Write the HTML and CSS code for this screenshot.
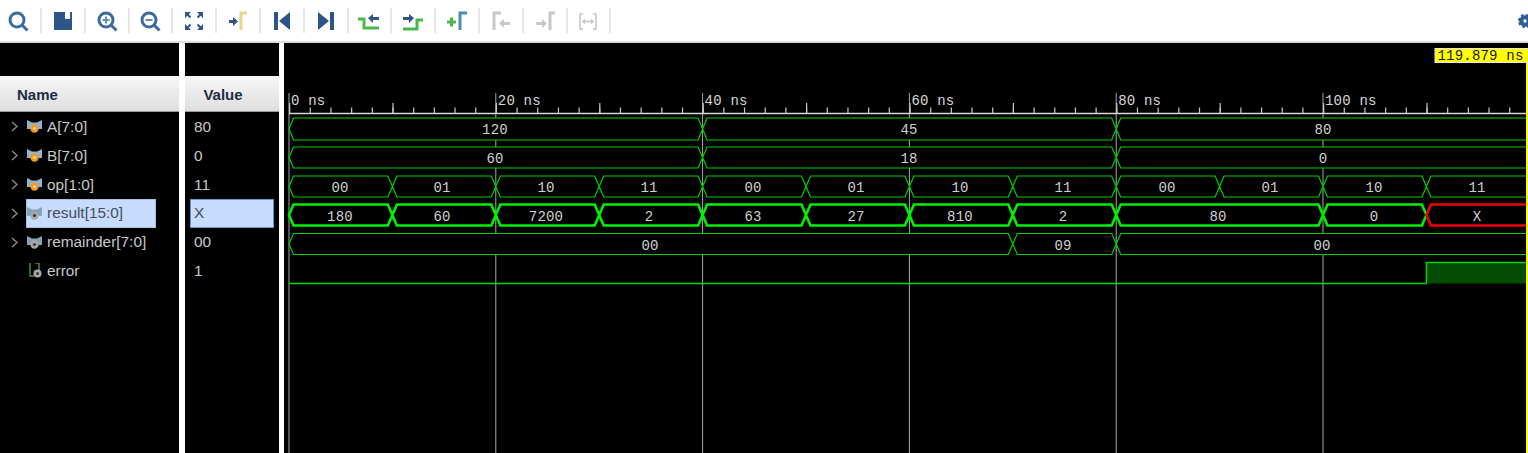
FILE: index.html
```html
<!DOCTYPE html>
<html lang="en">

<head>
  <meta charset="UTF-8">
  <title>Untitled - Wave</title>
  <link rel="stylesheet" href="styles.css">
</head>

<body>
  <div class="toolbar">
    <span class="tool tool-first">
      <svg class="ico" viewBox="0 0 24 24"><circle cx="11" cy="11" r="7" class="st-search"/><path d="M16 16l5.500 5.500" class="st-search"/></svg>
    </span>
    <span class="tool">
      <svg class="ico" viewBox="0 0 24 24"><path d="M3 3H21V21H3Z" class="fl-navy"/><path d="M14 3h5v7h-5z" class="fl-white"/></svg>
    </span>
    <span class="tool">
      <svg class="ico" viewBox="0 0 24 24"><circle cx="11" cy="11" r="7" class="st-search"/><path d="M16 16l5.500 5.500" class="st-search"/><path d="M7.500 11h7M11 7.500v7" class="st-thin"/></svg>
    </span>
    <span class="tool">
      <svg class="ico" viewBox="0 0 24 24"><circle cx="11" cy="11" r="7" class="st-search"/><path d="M16 16l5.500 5.500" class="st-search"/><path d="M7.500 11h7" class="st-thin"/></svg>
    </span>
    <span class="tool">
      <svg class="ico" viewBox="0 0 24 24"><path d="M4 4l4.500 4.500M20 4l-4.500 4.500M4 20l4.500-4.500M20 20l-4.500-4.500" class="st-fit"/><path d="M3 3h6L3 9zM21 3h-6l6 6zM3 21h6l-6-6zM21 21h-6l6-6z" class="fl-navy"/></svg>
    </span>
    <span class="tool">
      <svg class="ico" viewBox="0 0 24 24"><path d="M3 11h4V8l5 4.500-5 4.500v-3H3z" class="fl-navy"/><path d="M15 21V4h6" class="st-yellow"/></svg>
    </span>
    <span class="tool">
      <svg class="ico" viewBox="0 0 24 24"><path d="M4 3h4v18H4zM20 3v18L9 12z" class="fl-navy"/></svg>
    </span>
    <span class="tool">
      <svg class="ico" viewBox="0 0 24 24"><path d="M20 3h-4v18h4zM4 3v18l11-9z" class="fl-navy"/></svg>
    </span>
    <span class="tool">
      <svg class="ico" viewBox="0 0 24 24"><path d="M1 10h6v9h15" class="st-green"/><path d="M11 9l5-4v3h6v3h-6v3z" class="fl-navy"/></svg>
    </span>
    <span class="tool">
      <svg class="ico" viewBox="0 0 24 24"><path d="M2 20h14v-9h6" class="st-green"/><path d="M13 9L8 5v3H2v3h6v3z" class="fl-navy"/></svg>
    </span>
    <span class="tool">
      <svg class="ico" viewBox="0 0 24 24"><path d="M2 13h9M6.500 8.500v9" class="st-green"/><path d="M15 21V4h7" class="st-blue"/></svg>
    </span>
    <span class="tool">
      <svg class="ico" viewBox="0 0 24 24"><path d="M5 21V4h7" class="st-gray"/><path d="M10 14l5-4v3h6v3h-6v3z" class="fl-gray"/></svg>
    </span>
    <span class="tool">
      <svg class="ico" viewBox="0 0 24 24"><path d="M3 13h6v-3l5 4.500L9 19v-3H3z" class="fl-gray"/><path d="M17 21V4h5" class="st-gray"/></svg>
    </span>
    <span class="tool">
      <svg class="ico" viewBox="0 0 24 24"><path d="M7 5H4v15h3M17 5h3v15h-3" class="st-gray-thin"/><path d="M7 12.500h10M9 10.500l-2 2 2 2M15 10.500l2 2-2 2" class="st-gray-thin"/></svg>
    </span>
    <svg class="gear" viewBox="0 0 24 24"><circle cx="12" cy="12" r="4.500" class="gear-ring"/><circle cx="12" cy="12" r="7" class="gear-teeth"/></svg>
  </div>

  <div class="panes">
    <div class="names">
      <div class="pane-top"></div>
      <div class="head head-name">Name</div>
      <div class="rows">
        <div class="row"><svg class="chev" viewBox="0 0 7 11"><path d="M1 1l5 4.500-5 4.500"/></svg><div class="sig"><svg class="sig-ico" viewBox="0 0 15 13"><path d="M0 0l5 2.500h5L15 0v9H0z" class="wing"/><circle cx="7.500" cy="8.500" r="4.200" class="dot-in"/><circle cx="7.500" cy="8.500" r="1.600" class="dot-core"/></svg>A[7:0]</div></div>
        <div class="row"><svg class="chev" viewBox="0 0 7 11"><path d="M1 1l5 4.500-5 4.500"/></svg><div class="sig"><svg class="sig-ico" viewBox="0 0 15 13"><path d="M0 0l5 2.500h5L15 0v9H0z" class="wing"/><circle cx="7.500" cy="8.500" r="4.200" class="dot-in"/><circle cx="7.500" cy="8.500" r="1.600" class="dot-core"/></svg>B[7:0]</div></div>
        <div class="row"><svg class="chev" viewBox="0 0 7 11"><path d="M1 1l5 4.500-5 4.500"/></svg><div class="sig"><svg class="sig-ico" viewBox="0 0 15 13"><path d="M0 0l5 2.500h5L15 0v9H0z" class="wing"/><circle cx="7.500" cy="8.500" r="4.200" class="dot-in"/><circle cx="7.500" cy="8.500" r="1.600" class="dot-core"/></svg>op[1:0]</div></div>
        <div class="row"><svg class="chev" viewBox="0 0 7 11"><path d="M1 1l5 4.500-5 4.500"/></svg><div class="sig sig-selected"><svg class="sig-ico" viewBox="0 0 15 13"><path d="M0 0l5 2.500h5L15 0v9H0z" class="wing wing-dim"/><circle cx="7.500" cy="8.500" r="4.200" class="dot-out"/><circle cx="7.500" cy="8.500" r="1.600" class="dot-hole"/></svg>result[15:0]</div></div>
        <div class="row"><svg class="chev" viewBox="0 0 7 11"><path d="M1 1l5 4.500-5 4.500"/></svg><div class="sig"><svg class="sig-ico" viewBox="0 0 15 13"><path d="M0 0l5 2.500h5L15 0v9H0z" class="wing wing-dim"/><circle cx="7.500" cy="8.500" r="4.200" class="dot-out"/><circle cx="7.500" cy="8.500" r="1.600" class="dot-hole"/></svg>remainder[7:0]</div></div>
        <div class="row"><span class="chev"></span><div class="sig"><svg class="sig-ico sig-ico-bit" viewBox="0 0 15 15"><path d="M3 0v13h4M8 0h4v7" class="bit-line"/><circle cx="10.500" cy="10.500" r="4" class="dot-out"/><circle cx="10.500" cy="10.500" r="1.500" class="dot-hole"/></svg>error</div></div>
      </div>
    </div>

    <div class="values">
      <div class="pane-top"></div>
      <div class="head head-value">Value</div>
      <div class="rows">
        <div class="row"><div class="val">80</div></div>
        <div class="row"><div class="val">0</div></div>
        <div class="row"><div class="val">11</div></div>
        <div class="row"><div class="val val-selected">X</div></div>
        <div class="row"><div class="val">00</div></div>
        <div class="row"><div class="val">1</div></div>
      </div>
    </div>

    <svg class="wave" viewBox="284 43 1244 410">
      <!-- grid, every 20 ns -->
      <path class="grid" d="M289 93V453M495.800 93V453M702.600 93V453M909.400 93V453M1116.200 93V453M1323 93V453"/>

      <!-- ruler -->
      <path class="axis" d="M289 113.500H1526"/>
      <line class="tick" x1="289" x2="1526" y1="110.500" y2="110.500"/>
      <line class="tick-10" x1="289" x2="1526" y1="108" y2="108"/>
      <text class="time" x="291" y="104.500">0 ns</text>
      <text class="time" x="497.800" y="104.500">20 ns</text>
      <text class="time" x="704.600" y="104.500">40 ns</text>
      <text class="time" x="911.400" y="104.500">60 ns</text>
      <text class="time" x="1118.200" y="104.500">80 ns</text>
      <text class="time" x="1325" y="104.500">100 ns</text>

      <!-- A[7:0] -->
      <path class="bus" d="M289 129L293.500 118H698.100L702.600 129L698.100 140H293.500ZM702.600 129L707.100 118H1111.700L1116.200 129L1111.700 140H707.100ZM1116.200 129L1120.700 118H1540V140H1120.700Z"/>
      <text class="val-text" x="495" y="134">120</text>
      <text class="val-text" x="909" y="134">45</text>
      <text class="val-text" x="1323" y="134">80</text>

      <!-- B[7:0] -->
      <path class="bus" d="M289 157.500L293.500 147H698.100L702.600 157.500L698.100 168H293.500ZM702.600 157.500L707.100 147H1111.700L1116.200 157.500L1111.700 168H707.100ZM1116.200 157.500L1120.700 147H1540V168H1120.700Z"/>
      <text class="val-text" x="495" y="163">60</text>
      <text class="val-text" x="909" y="163">18</text>
      <text class="val-text" x="1323" y="163">0</text>

      <!-- op[1:0] -->
      <path class="bus" d="M289 186.500L293.500 176H387.900L392.400 186.500L387.900 197H293.500ZM392.400 186.500L396.900 176H491.300L495.800 186.500L491.300 197H396.900ZM495.800 186.500L500.300 176H594.700L599.200 186.500L594.700 197H500.300ZM599.200 186.500L603.700 176H698.100L702.600 186.500L698.100 197H603.700ZM702.600 186.500L707.100 176H801.500L806 186.500L801.500 197H707.100ZM806 186.500L810.500 176H904.900L909.400 186.500L904.900 197H810.500ZM909.400 186.500L913.900 176H1008.300L1012.800 186.500L1008.300 197H913.900ZM1012.800 186.500L1017.300 176H1111.700L1116.200 186.500L1111.700 197H1017.300ZM1116.200 186.500L1120.700 176H1215.100L1219.600 186.500L1215.100 197H1120.700ZM1219.600 186.500L1224.100 176H1318.500L1323 186.500L1318.500 197H1224.100ZM1323 186.500L1327.500 176H1421.900L1426.400 186.500L1421.900 197H1327.500ZM1426.400 186.500L1430.900 176H1540V197H1430.900Z"/>
      <text class="val-text" x="340" y="192">00</text>
      <text class="val-text" x="442" y="192">01</text>
      <text class="val-text" x="546" y="192">10</text>
      <text class="val-text" x="649" y="192">11</text>
      <text class="val-text" x="753" y="192">00</text>
      <text class="val-text" x="856" y="192">01</text>
      <text class="val-text" x="960" y="192">10</text>
      <text class="val-text" x="1063" y="192">11</text>
      <text class="val-text" x="1167" y="192">00</text>
      <text class="val-text" x="1270" y="192">01</text>
      <text class="val-text" x="1374" y="192">10</text>
      <text class="val-text" x="1477" y="192">11</text>

      <!-- result[15:0] -->
      <path class="bus bus-active" d="M289 215L293.500 204.500H387.900L392.400 215L387.900 225.500H293.500ZM392.400 215L396.900 204.500H491.300L495.800 215L491.300 225.500H396.900ZM495.800 215L500.300 204.500H594.700L599.200 215L594.700 225.500H500.300ZM599.200 215L603.700 204.500H698.100L702.600 215L698.100 225.500H603.700ZM702.600 215L707.100 204.500H801.500L806 215L801.500 225.500H707.100ZM806 215L810.500 204.500H904.900L909.400 215L904.900 225.500H810.500ZM909.400 215L913.900 204.500H1008.300L1012.800 215L1008.300 225.500H913.900ZM1012.800 215L1017.300 204.500H1111.700L1116.200 215L1111.700 225.500H1017.300ZM1116.200 215L1120.700 204.500H1318.500L1323 215L1318.500 225.500H1120.700ZM1323 215L1327.500 204.500H1421.900L1426.400 215L1421.900 225.500H1327.500Z"/>
      <path class="bus bus-x" d="M1426.400 215L1430.900 204.500H1540V225.500H1430.900Z"/>
      <text class="val-text" x="340" y="220.500">180</text>
      <text class="val-text" x="442" y="220.500">60</text>
      <text class="val-text" x="546" y="220.500">7200</text>
      <text class="val-text" x="649" y="220.500">2</text>
      <text class="val-text" x="753" y="220.500">63</text>
      <text class="val-text" x="856" y="220.500">27</text>
      <text class="val-text" x="960" y="220.500">810</text>
      <text class="val-text" x="1063" y="220.500">2</text>
      <text class="val-text" x="1218" y="220.500">80</text>
      <text class="val-text" x="1374" y="220.500">0</text>
      <text class="val-text" x="1477" y="220.500">X</text>

      <!-- remainder[7:0] -->
      <path class="bus" d="M289 244L293.500 233.500H1008.300L1012.800 244L1008.300 254.500H293.500ZM1012.800 244L1017.300 233.500H1111.700L1116.200 244L1111.700 254.500H1017.300ZM1116.200 244L1120.700 233.500H1540V254.500H1120.700Z"/>
      <text class="val-text" x="650" y="249.500">00</text>
      <text class="val-text" x="1063" y="249.500">09</text>
      <text class="val-text" x="1322" y="249.500">00</text>

      <!-- error -->
      <path class="bit-high" d="M1426.400 262.500H1526V283.500H1426.400Z"/>
      <path class="bit" d="M289 283.500H1426.400V262.500H1526"/>

      <!-- cursor -->
      <path class="cursor" d="M1527 63V453"/>
      <rect class="cursor-box" x="1435" y="48.500" width="94" height="14"/>
      <text class="cursor-text" x="1437.500" y="60">119.879 ns</text>
    </svg>
  </div>
</body>

</html>
```

FILE: styles.css
```css
html,
body {
  margin: 0;
  height: 453px;
  overflow: hidden;
  background-color: #fff;
  font-family: "Liberation Sans", Arial, sans-serif;
}

/* toolbar */
.toolbar {
  display: flex;
  align-items: center;
  height: 41px;
  box-sizing: content-box;
  background-color: #fff;
  border-bottom: 2px solid #dcdcdc;
  overflow: hidden;
}

.tool {
  display: flex;
  align-items: center;
  justify-content: center;
  flex: none;
  width: 43.8px;
  height: 25px;
  box-sizing: border-box;
  border-right: 2px solid #e6e6e6;
}

.tool-first {
  width: 42px;
  padding-right: 4px;
}

.ico {
  width: 24px;
  height: 24px;
  fill: none;
}

.gear {
  width: 20px;
  height: 20px;
  margin-left: auto;
  margin-right: -7px;
  fill: none;
}

.gear-ring {
  stroke: #2f5e96;
  stroke-width: 5;
}

.gear-teeth {
  stroke: #2f5e96;
  stroke-width: 3;
  stroke-dasharray: 3 2.500;
}

.fl-navy { fill: #2f5488; }
.fl-white { fill: #fff; }
.fl-gray { fill: #c8c8c8; }
.st-search { stroke: #3c6a9e; stroke-width: 3; }
.st-thin { stroke: #5f8fb8; stroke-width: 2; }
.st-fit { stroke: #2f5488; stroke-width: 2; }
.st-yellow { stroke: #e6d68a; stroke-width: 3; }
.st-green { stroke: #4cb848; stroke-width: 3; }
.st-blue { stroke: #4a8cc0; stroke-width: 3; }
.st-gray { stroke: #c8c8c8; stroke-width: 3; }
.st-gray-thin { stroke: #c4c4c4; stroke-width: 1.5; }

/* panes */
.panes {
  display: flex;
  height: 410px;
  background-color: #fff;
}

.names {
  width: 179px;
  margin-right: 6px;
  background-color: #000;
}

.values {
  width: 94px;
  margin-right: 5px;
  background-color: #000;
}

.pane-top {
  height: 33px;
}

.head {
  height: 36px;
  line-height: 38px;
  font-size: 15px;
  font-weight: bold;
  color: #1e2c44;
  background: linear-gradient(#f6f6f6, #dfdfdf);
  border-bottom: 1px solid #9a9a9a;
  box-sizing: border-box;
}

.head-name {
  padding-left: 17px;
}

.head-value {
  text-align: center;
  padding-right: 18px;
}

.rows {
  padding-top: 0.6px;
  font-size: 15.4px;
  color: #c8c8c8;
}

.row {
  display: flex;
  align-items: center;
  height: 28.8px;
}

.chev {
  flex: none;
  width: 7px;
  height: 11px;
  margin-left: 11px;
  margin-right: 8px;
  fill: none;
  stroke: #8a8a8a;
  stroke-width: 1.5;
}

.sig {
  display: flex;
  align-items: center;
  gap: 5px;
  width: 130px;
  height: 100%;
  padding-left: 1px;
  box-sizing: border-box;
}

.sig-selected {
  background-color: #c6dbfd;
  border: 1px solid #a8c0e4;
  padding-left: 0;
  color: #474c5c;
}

.sig-ico {
  flex: none;
  width: 15px;
  height: 13px;
}

.sig-ico-bit {
  height: 15px;
}

.wing { fill: #8fb4d0; }
.wing-dim { fill: #86a4b8; }
.dot-in { fill: #f09a2c; }
.dot-core { fill: #f8d08c; }
.dot-out { fill: #a8a8a8; }
.dot-hole { fill: #3a3a3a; }
.bit-line { fill: none; stroke: #3f9a48; stroke-width: 1.4; }

.val {
  display: flex;
  align-items: center;
  width: 84px;
  height: 100%;
  margin-left: 5px;
  padding-left: 4px;
  box-sizing: border-box;
}

.val-selected {
  padding-left: 3px;
  background-color: #c6dbfd;
  border: 1px solid #5b9bd5;
  color: #474c5c;
}

/* waveform */
.wave {
  flex: none;
  display: block;
  width: 1244px;
  height: 410px;
  background-color: #000;
  fill: none;
  font-family: "Liberation Mono", monospace;
  font-size: 14px;
}

.grid {
  stroke: #a8a8a8;
  stroke-width: 1;
}

.axis {
  stroke: #d8d8d8;
  stroke-width: 1.5;
}

.tick {
  stroke: #c8c8c8;
  stroke-width: 6;
  stroke-dasharray: 1.2 19.48;
}

.tick-10 {
  stroke: #c8c8c8;
  stroke-width: 10;
  stroke-dasharray: 1.2 102.2;
}

.time {
  fill: #d8d8d8;
  letter-spacing: 0.2px;
}

.val-text {
  fill: #d0d0d0;
  text-anchor: middle;
  letter-spacing: 0.2px;
}

.bus {
  fill: #000;
  stroke: #00d000;
  stroke-width: 1.2;
}

.bus-active {
  stroke: #00f000;
  stroke-width: 2.6;
}

.bus-x {
  stroke: #f00000;
  stroke-width: 2.6;
}

.bit {
  stroke: #00d800;
  stroke-width: 1.4;
}

.bit-high {
  fill: #044c04;
}

.cursor {
  stroke: #ffff00;
  stroke-width: 2;
}

.cursor-box {
  fill: #ffff00;
  stroke: #e8e8e8;
  stroke-width: 1;
}

.cursor-text {
  fill: #1a1a1a;
  letter-spacing: 0.2px;
}
```
